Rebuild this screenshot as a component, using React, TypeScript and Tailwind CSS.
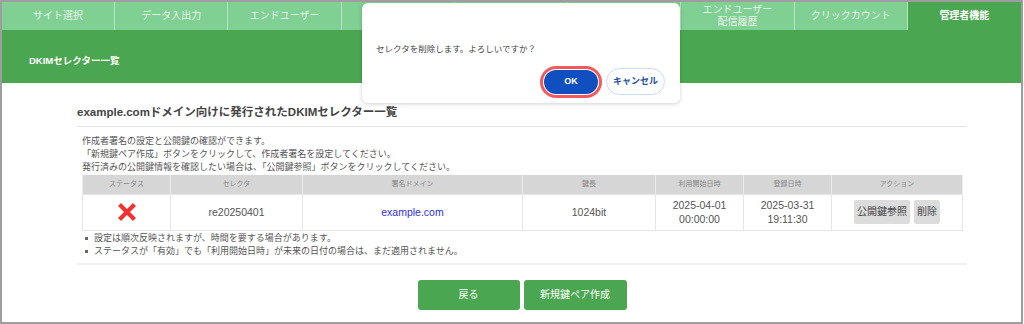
import React from "react";

const tabs = [
  ["サイト選択"],
  ["データ入出力"],
  ["エンドユーザー"],
  ["ドメイン設定"],
  ["配信設定"],
  ["送信ログ"],
  ["エンドユーザー", "配信履歴"],
  ["クリックカウント"],
  ["管理者機能"],
];

const cols = [
  { label: "ステータス", w: "w-[88px]" },
  { label: "セレクタ", w: "w-[132px]" },
  { label: "署名ドメイン", w: "w-[220px]" },
  { label: "鍵長", w: "w-[133px]" },
  { label: "利用開始日時", w: "w-[88px]" },
  { label: "登録日時", w: "w-[88px]" },
  { label: "アクション", w: "w-[131px]" },
];

const RedCross = () => (
  <svg width="18" height="18" viewBox="0 0 18 18" className="mx-auto">
    <path d="M3 3 L15 15 M15 3 L3 15" stroke="#f2302f" strokeWidth="4.2" strokeLinecap="square" />
  </svg>
);

export default function App() {
  return (
    <div className="relative w-[1023px] h-[324px] overflow-hidden border-2 border-[#9e9e9e] bg-white font-['Liberation_Sans','Noto_Sans_CJK_JP',sans-serif] text-[#555]">
      {/* Tabs */}
      <div className="grid grid-cols-9 h-[28px] bg-[#80cf93]">
        {tabs.map((t, i) => {
          const active = i === tabs.length - 1;
          return (
            <div
              key={i}
              className={`flex flex-col items-center justify-center pb-[1px] text-[10px] leading-[12px] ${
                active
                  ? "bg-[#4ba651] text-white font-bold"
                  : "text-[#e9f7ec] border-r border-[#b3e3c0]"
              }`}
            >
              {t.map((line) => (
                <span key={line}>{line}</span>
              ))}
            </div>
          );
        })}
      </div>

      {/* Green bar */}
      <div className="h-[53px] bg-[#4ba651] flex items-end pb-[15px] pl-[27px]">
        <span className="text-white text-[9.5px] font-bold">DKIMセレクター一覧</span>
      </div>

      {/* Content */}
      <div className="ml-[75px] w-[890px]">
        <h1 className="mt-[20px] h-[18px] text-[11.5px] leading-[18px] font-bold text-[#444]">
          example.comドメイン向けに発行されたDKIMセレクター一覧
        </h1>
        <div className="mt-[5px] h-px bg-[#e3e3e3]" />
        <div className="mt-[8px] px-[5px] text-[9px] leading-[13px]">
          <p>作成者署名の設定と公開鍵の確認ができます。</p>
          <p>「新規鍵ペア作成」ボタンをクリックして、作成者署名を設定してください。</p>
          <p>発行済みの公開鍵情報を確認したい場合は、「公開鍵参照」ボタンをクリックしてください。</p>
        </div>

        <table className="ml-[5px] mt-[1px] w-[881px] table-fixed border-collapse">
          <thead>
            <tr className="h-[19px] bg-[#d6d6d6]">
              {cols.map((c) => (
                <th
                  key={c.label}
                  className={`${c.w} border-x border-[#ececec] text-[7px] font-normal text-[#888]`}
                >
                  {c.label}
                </th>
              ))}
            </tr>
          </thead>
          <tbody>
            <tr className="h-[36px] text-center text-[10.5px] leading-[14px] text-[#555]">
              <td className="border border-[#e6e6e6]">
                <RedCross />
              </td>
              <td className="border border-[#e6e6e6]">re20250401</td>
              <td className="border border-[#e6e6e6] text-[#2e2ee6]">example.com</td>
              <td className="border border-[#e6e6e6]">1024bit</td>
              <td className="border border-[#e6e6e6]">
                2025-04-01
                <br />
                00:00:00
              </td>
              <td className="border border-[#e6e6e6]">
                2025-03-31
                <br />
                19:11:30
              </td>
              <td className="border border-[#e6e6e6]">
                <div className="flex justify-center gap-[4px]">
                  <button className="h-[24px] px-[3px] bg-[#dcdcdc] text-[10px] text-[#444] rounded-[2px]">
                    公開鍵参照
                  </button>
                  <button className="h-[24px] px-[3px] bg-[#dcdcdc] text-[10px] text-[#444] rounded-[2px]">
                    削除
                  </button>
                </div>
              </td>
            </tr>
          </tbody>
        </table>

        <ul className="mt-[1px] pl-[8px] text-[9px] leading-[13px]">
          <li className="flex items-center gap-[6px]">
            <span className="w-[3px] h-[3px] bg-[#666]" />
            設定は順次反映されますが、時間を要する場合があります。
          </li>
          <li className="flex items-center gap-[6px]">
            <span className="w-[3px] h-[3px] bg-[#666]" />
            ステータスが「有効」でも「利用開始日時」が未来の日付の場合は、まだ適用されません。
          </li>
        </ul>

        <div className="mt-[5px] h-[2px] bg-[#efefef]" />

        <div className="mt-[15px] flex justify-center gap-[4px]">
          <button className="w-[102px] h-[30px] rounded-[3px] bg-[#4ba651] text-white text-[10px]">
            戻る
          </button>
          <button className="w-[103px] h-[30px] rounded-[3px] bg-[#4ba651] text-white text-[10px]">
            新規鍵ペア作成
          </button>
        </div>
      </div>

      {/* Confirm dialog */}
      <div className="absolute left-[360px] top-[1px] w-[318px] h-[100px] rounded-[6px] bg-white shadow-[0_1px_4px_rgba(0,0,0,0.18)] px-[14px]">
        <p className="mt-[40px] text-[8.5px] leading-[12px] text-[#444]">
          セレクタを削除します。よろしいですか？
        </p>
        <div className="mt-[11px] flex justify-end gap-[4px] pr-[1px]">
          <button className="w-[62px] h-[32px] rounded-full border-[3px] border-[#f2595c] p-[1px] flex">
            <span className="flex-1 rounded-full bg-[#0f4fbf] text-white text-[9px] font-bold flex items-center justify-center">
              OK
            </span>
          </button>
          <button className="mt-[2px] w-[59px] h-[27px] rounded-full border border-[#c9dcf4] bg-white text-[#1f4fa5] text-[9px] font-bold">
            キャンセル
          </button>
        </div>
      </div>
    </div>
  );
}
